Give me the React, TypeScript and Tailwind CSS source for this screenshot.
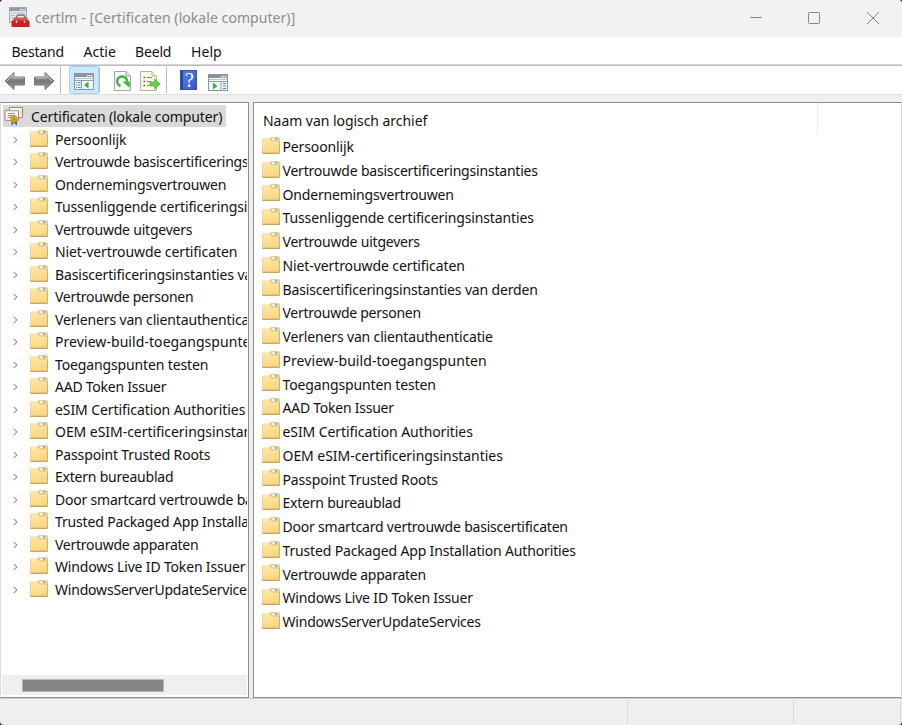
import { useLayoutEffect, useRef, useState } from "react";

const stores: [string, number][] = [
  ["Persoonlijk", 71],
  ["Vertrouwde basiscertificeringsinstanties", 255],
  ["Ondernemingsvertrouwen", 171],
  ["Tussenliggende certificeringsinstanties", 251],
  ["Vertrouwde uitgevers", 137],
  ["Niet-vertrouwde certificaten", 182],
  ["Basiscertificeringsinstanties van derden", 255],
  ["Vertrouwde personen", 138],
  ["Verleners van clientauthenticatie", 210],
  ["Preview-build-toegangspunten", 204],
  ["Toegangspunten testen", 153],
  ["AAD Token Issuer", 111],
  ["eSIM Certification Authorities", 190],
  ["OEM eSIM-certificeringsinstanties", 220],
  ["Passpoint Trusted Roots", 155],
  ["Extern bureaublad", 118],
  ["Door smartcard vertrouwde basiscertificaten", 285],
  ["Trusted Packaged App Installation Authorities", 293],
  ["Vertrouwde apparaten", 143],
  ["Windows Live ID Token Issuer", 190],
  ["WindowsServerUpdateServices", 198],
];

/* Label whose tracking is tuned so that it takes up the given width. */
function Label({ text, width }: { text: string; width: number }) {
  const ref = useRef<HTMLSpanElement>(null);
  const [spacing, setSpacing] = useState(0);
  useLayoutEffect(() => {
    if (ref.current) {
      const natural = ref.current.getBoundingClientRect().width - spacing * text.length;
      setSpacing((width + 0.3 - natural) / text.length);
    }
  }, [text, width]);
  return (
    <span ref={ref} className="inline-block whitespace-pre" style={{ letterSpacing: spacing }}>
      {text}
    </span>
  );
}

function Folder() {
  return (
    <svg width="18" height="17" viewBox="0 0 18 17" className="shrink-0">
      <defs>
        <linearGradient id="fold" x1="0" y1="0" x2="0.4" y2="1">
          <stop offset="0" stopColor="#ffe9a8" />
          <stop offset="1" stopColor="#f8d680" />
        </linearGradient>
      </defs>
      <path d="M8 6V1.300L9 .4h7.500l1 .9V6z" fill="#efcf84" stroke="#d0ab5c" strokeWidth=".5" />
      <path d="M10 1.300h6.300v1.700H10z" fill="#f4f4ee" />
      <path d="M13 1.300h2.500v1.400H13z" fill="#4f9fd8" />
      <path d="M.4 2h7.400l1.400 2.600h8.300v11.700H.4z" fill="url(#fold)" stroke="#dfbd72" strokeWidth=".6" />
      <path d="M1 2.600h6.400l1.400 2.600h8" fill="none" stroke="#fff0bf" strokeWidth=".6" />
      <path d="M.3 16.300h17.300" fill="none" stroke="#b48f48" strokeWidth=".9" />
      <path d="M17.500 5v11" fill="none" stroke="#c9a45a" strokeWidth=".7" />
    </svg>
  );
}

function AppIcon() {
  return (
    <svg width="21" height="21" viewBox="0 0 21 21">
      <rect x=".5" y=".5" width="17" height="15" fill="#e4e9ee" stroke="#9aa7b5" />
      <path d="M1 1h16v3H1z" fill="#8c9caf" />
      <path d="M11 2h1.500v1.200H11zM13.300 2h1.300v1.200h-1.300zM15.300 2h1.200v1.200h-1.200z" fill="#fff" />
      <path d="M2 6h14M2 8.500h4M2 11h2" stroke="#b0bbc6" />
      <path d="M7.500 11V9.800Q8 8 10 8h3.500q2 0 2.500 1.800V11" fill="none" stroke="#77706f" strokeWidth="1.400" />
      <path d="M5 10.500h13l2 4H3z" fill="#d9534b" />
      <path d="M2.500 14h18v6h-18z" fill="#c9231d" />
      <path d="M3 14h17" stroke="#b5241e" strokeWidth=".8" />
      <path d="M6.800 13.800h1.400v2.200H6.800zM14.800 13.800h1.400v2.200h-1.400z" fill="#f0dad5" />
    </svg>
  );
}

function Arrow({ flip = false }: { flip?: boolean }) {
  return (
    <svg width="22" height="20" viewBox="0 0 22 20" className={flip ? "-scale-x-100" : ""}>
      <defs>
        <linearGradient id="arrowFill" x1="0" y1="0" x2="0" y2="1">
          <stop offset="0" stopColor="#b0b0b0" />
          <stop offset=".5" stopColor="#777" />
          <stop offset="1" stopColor="#a0a0a0" />
        </linearGradient>
      </defs>
      <path d="M1 10L10 1.500V6h10.500v8H10v4.500z" fill="url(#arrowFill)" stroke="#797979" strokeLinejoin="round" />
      <path d="M3 10l6-5.700V7h10.200" fill="none" stroke="#c6c6c6" />
    </svg>
  );
}

function PaneIcon({ right = false }: { right?: boolean }) {
  return (
    <svg width="20" height="17" viewBox="0 0 20 17">
      <rect x=".5" y=".5" width="19" height="16" fill="#f4f6f8" stroke="#8d959d" />
      <path d="M1 1h18v3H1z" fill="#88939e" />
      <path d="M13 2h1.400v1.300H13zM15 2h1.400v1.300H15zM17 2h1.300v1.300H17z" fill="#fff" />
      <path d="M1 5.500h18" stroke="#bac1c8" />
      <path d="M1 7.500h18" stroke="#959ea6" />
      {right ? (
        <>
          <path d="M13 7v9" stroke="#929aa2" />
          <path d="M15 9.500h3M15 12h3M15 14.500h3" stroke="#408bc5" />
          <path d="M5 8.500v7l4.500-3.500z" fill="#38b52d" />
        </>
      ) : (
        <>
          <path d="M7.500 7v9" stroke="#929aa2" />
          <path d="M2 9.500h1.200M4 9.500h2.500M2 12h1.200M4 12h2.500M2 14.500h1.200M4 14.500h2.500" stroke="#408bc5" />
          <path d="M14.500 8.500v7L10 12z" fill="#38b52d" />
        </>
      )}
    </svg>
  );
}

function RefreshIcon() {
  return (
    <svg width="17" height="20" viewBox="0 0 17 20">
      <path d="M.5.500H12L16.500 5v14.500H.5z" fill="#f8f9fa" stroke="#a4a4a8" />
      <path d="M12 .5V5h4.500" fill="#e4e6e8" stroke="#a4a4a8" />
      <path d="M6.500 15A4.900 4.900 0 1 1 13 10.500" fill="none" stroke="#3bb53c" strokeWidth="2.500" />
      <path d="M8.500 10.500h7.200v6.300z" fill="#3bb53c" />
    </svg>
  );
}

function ExportIcon() {
  return (
    <svg width="21" height="20" viewBox="0 0 21 20">
      <path d="M.5.500H12L16.500 5v14.500H.5z" fill="#fffbe1" stroke="#b3b0a5" />
      <path d="M12 .5V5h4.500" fill="#f1eed9" stroke="#b3b0a5" />
      <path d="M3.500 6.500H5M3.500 10.500H5M3.500 14.500H5" stroke="#475075" strokeWidth="1.300" />
      <path d="M6.500 6.500H12M6.500 10.500H11M6.500 14.500H12" stroke="#86869b" strokeWidth="1.200" />
      <path d="M10 11h4.500V8l5.800 5-5.800 5v-3H10z" fill="#64cf43" stroke="#46b932" strokeWidth=".7" />
    </svg>
  );
}

function HelpIcon() {
  return (
    <span className="relative flex h-[20px] w-[17px] items-center justify-center border border-[#3552ab] bg-linear-to-br from-[#5a83e4] to-[#2f58c8] font-['Liberation_Serif',serif] text-[20px] leading-none text-white">
      <span className="absolute inset-y-0 left-0 w-[2px] bg-[#2a459c]" />
      <span className="pl-[2px]">?</span>
    </span>
  );
}

function CertIcon() {
  return (
    <svg width="20" height="20" viewBox="0 0 20 20">
      <path d="M5.500 1.500h13v10h-13z" fill="#fffef8" stroke="#9c8163" />
      <path d="M17 3v7" stroke="#ddd3c2" />
      <path d="M1 4.700h13.500v9.600H1z" fill="#fffef8" stroke="#a48a63" />
      <path d="M4 7.500h7M3.500 9.500h8M3.500 11.500h4" stroke="#8791a5" />
      <path d="M7.500 14v5.500l2.500-2 3 2V14z" fill="#2c70d0" />
      <path d="M10 16.500v2" stroke="#e8eef8" />
      <circle cx="10" cy="13" r="3.300" fill="#e3a511" stroke="#c78207" strokeWidth=".7" />
      <circle cx="10" cy="13" r="1.100" fill="#ba7905" />
    </svg>
  );
}

function Separator() {
  return <span className="h-[26px] w-px bg-[#b8b8b8]" />;
}

export default function App() {
  return (
    <div className="h-[725px] w-[902px] bg-[#202026]">
      <div className="flex h-full w-full flex-col overflow-hidden rounded-[4px] bg-[#efefef] font-['Noto_Sans','Open_Sans',sans-serif] text-[14px] leading-[20px] text-[#111]">
        <header className="flex h-[37px] shrink-0 items-center bg-[#f2f2f2] pl-[9px] text-[#8c8c8c]">
          <div className="pb-[3px]"><AppIcon /></div>
          <div className="ml-[5px] pb-px">
            <Label text="certlm - [Certificaten (lokale computer)]" width={260} />
          </div>
          <svg className="-mt-[2px] ml-auto mr-[22px]" width="131" height="14" viewBox="0 0 131 14" fill="none" stroke="#858585">
            <path d="M1 6.500h12" />
            <rect x="59.500" y="1.500" width="11" height="11" rx="1" />
            <path d="M118 1l12 12M130 1l-12 12" />
          </svg>
        </header>

        <nav className="flex h-[27px] shrink-0 items-center bg-white pl-[11.500px] pt-[2px]">
          <div className="w-[72px]"><Label text="Bestand" width={52} /></div>
          <div className="w-[51.500px]"><Label text="Actie" width={32} /></div>
          <div className="w-[56px]"><Label text="Beeld" width={36} /></div>
          <Label text="Help" width={30.5} />
        </nav>
        <div className="h-[2px] shrink-0 border-b border-[#b7bbc2] bg-[#d8d8d8]" />

        <div className="flex h-[28px] shrink-0 items-center bg-white pl-[4px]">
          <div className="mt-px"><Arrow /></div>
          <div className="mt-px ml-[7px]"><Arrow flip /></div>
          <div className="ml-[5px] flex"><Separator /></div>
          <div className="ml-[8px] flex h-[28px] w-[30px] items-center justify-center rounded-[2px] border border-[#a8d5f5] bg-[#cce8ff] pt-[3px]"><PaneIcon /></div>
          <div className="flex"><Separator /></div>
          <div className="ml-[14px] pt-px"><RefreshIcon /></div>
          <div className="ml-[9px] pt-px"><ExportIcon /></div>
          <div className="ml-[5px] flex"><Separator /></div>
          <div className="ml-[13px]"><HelpIcon /></div>
          <div className="ml-[11px] pt-[4px]"><PaneIcon right /></div>
        </div>

        <div className="h-[8px] shrink-0 border-t border-[#dedede] bg-[#efefef]" />
        <main className="flex h-[596px] shrink-0 gap-[4px] bg-[#ededed]">
          <section className="flex w-[249px] shrink-0 flex-col border border-[#8a8d95] border-l-[#dcdcdc] bg-white">
            <div className="ml-[2px] mt-[2px] flex h-[22px] w-[223px] shrink-0 items-center bg-[#d9d9d9] pl-[2px]">
              <div className="-ml-px"><CertIcon /></div>
              <div className="ml-[7px] pt-px"><Label text="Certificaten (lokale computer)" width={191} /></div>
            </div>
            <div className="mr-px overflow-hidden">
              {stores.map(([name, width]) => (
                <div key={name} className="flex h-[22.5px] items-center pl-[12px]">
                  <svg width="5" height="8" viewBox="0 0 5 8" className="mt-[3px] shrink-0" fill="none" stroke="#999" strokeWidth="1.100">
                    <path d="M.7.8L4 4 .7 7.200" />
                  </svg>
                  <div className="ml-[12px] flex"><Folder /></div>
                  <div className="ml-[7px] pt-[3px]"><Label text={name} width={width} /></div>
                </div>
              ))}
            </div>
            <div className="mx-px mb-[2px] mt-auto flex h-[20px] shrink-0 items-center bg-[#efefef] pl-[20px]">
              <div className="h-[13px] w-[142px] border border-[#b7b7b7] bg-[#858585]" />
            </div>
          </section>

          <section className="min-w-0 flex-1 border border-[#8a8d95] border-r-[#dcdcdc] bg-white">
            <div className="flex h-[32px] w-[564px] items-center border-r border-[#ebebeb] pl-[9px] pt-[4px]">
              <Label text="Naam van logisch archief" width={164} />
            </div>
            {stores.map(([name, width]) => (
              <div key={name} className="flex h-[23.75px] items-center pl-[7.500px]">
                <div className="flex pb-[3px]"><Folder /></div>
                <div className="ml-[3px] pt-[0.500px]"><Label text={name} width={width} /></div>
              </div>
            ))}
          </section>
        </main>

        <footer className="flex flex-1 border-t border-[#cfcfcf] pt-[2px]">
          <div className="w-[628px] border-r border-[#dadada]" />
          <div className="w-[166px] border-r border-[#dadada]" />
          <div className="w-[107px] border-r border-[#dadada]" />
        </footer>
      </div>
    </div>
  );
}
